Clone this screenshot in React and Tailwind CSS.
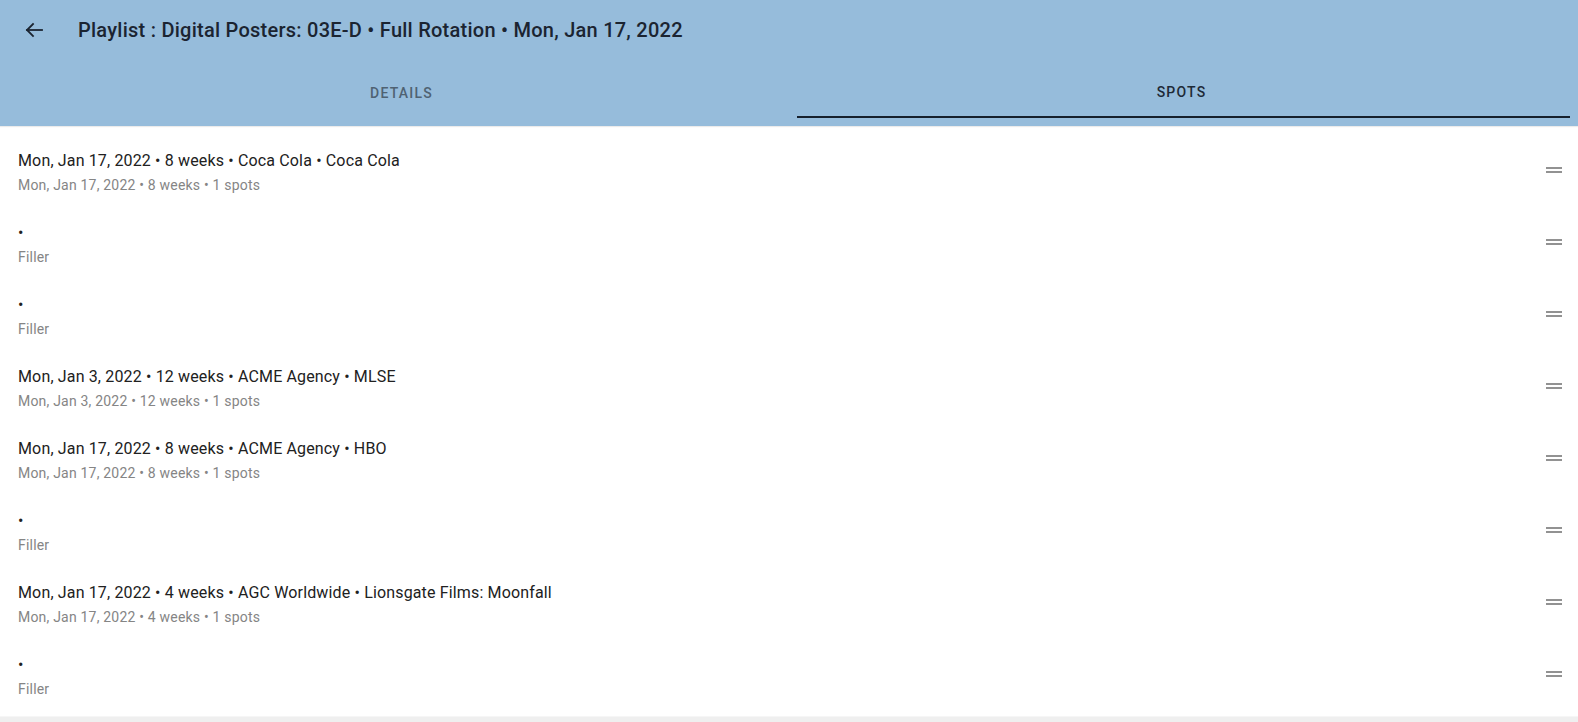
// Playlist detail screen: app bar with tabs and a sortable list of spots.

const spots = [
  { primary: "Mon, Jan 17, 2022 • 8 weeks • Coca Cola • Coca Cola", secondary: "Mon, Jan 17, 2022 • 8 weeks • 1 spots" },
  { primary: "•", secondary: "Filler" },
  { primary: "•", secondary: "Filler" },
  { primary: "Mon, Jan 3, 2022 • 12 weeks • ACME Agency • MLSE", secondary: "Mon, Jan 3, 2022 • 12 weeks • 1 spots" },
  { primary: "Mon, Jan 17, 2022 • 8 weeks • ACME Agency • HBO", secondary: "Mon, Jan 17, 2022 • 8 weeks • 1 spots" },
  { primary: "•", secondary: "Filler" },
  { primary: "Mon, Jan 17, 2022 • 4 weeks • AGC Worldwide • Lionsgate Films: Moonfall", secondary: "Mon, Jan 17, 2022 • 4 weeks • 1 spots" },
  { primary: "•", secondary: "Filler" },
];

function BackArrow() {
  return (
    <svg width="24" height="24" viewBox="0 0 24 24" fill="none" stroke="#1b2431" strokeWidth="1.8" strokeLinecap="square">
      <path d="M20 12H5" />
      <path d="M11 6l-6 6 6 6" />
    </svg>
  );
}

function DragHandle() {
  return (
    <svg width="24" height="24" viewBox="0 0 24 24" fill="#929292">
      <path d="M20 9H4v2h16V9zM4 15h16v-2H4v2z" />
    </svg>
  );
}

function SpotRow({ primary, secondary }) {
  return (
    <li className="flex items-center h-[72px] pl-[18px] pr-[12px]">
      <div className="flex-1 flex flex-col pt-[4px]">
        <span className="text-[16px] leading-[24px] tracking-[0.15px] text-[#212121]">{primary}</span>
        <span className="mt-[2px] text-[14px] leading-[20px] tracking-[0.2px] text-[#858585]">{secondary}</span>
      </div>
      <DragHandle />
    </li>
  );
}

export default function App() {
  return (
    <div className="h-screen flex flex-col bg-white" style={{ fontFamily: "Roboto, 'Liberation Sans', sans-serif" }}>
      <header className="bg-[#96bcdb] shadow-[0_1px_1px_rgba(0,0,0,0.08)] pb-[8px]">
        <div className="h-[60px] flex items-center pl-[22px]">
          <BackArrow />
          <h1 className="ml-[32px] text-[20px] font-medium text-[#1b2431] tracking-[0.25px]">
            Playlist : Digital Posters: 03E-D • Full Rotation • Mon, Jan 17, 2022
          </h1>
        </div>
        <nav className="flex h-[58px]">
          <button className="w-[797px] flex items-center justify-center pt-[9px] pl-[6px] text-[14px] font-medium uppercase tracking-[1.2px] text-[#4f6272]">
            Details
          </button>
          <button className="w-[773px] flex items-center justify-center pt-[9px] pr-[4px] text-[14px] font-medium uppercase tracking-[1.2px] text-[#1e2a37] border-b-2 border-[#16202c]">
            Spots
          </button>
        </nav>
      </header>
      <ul className="pt-[8px] pb-[6px]">
        {spots.map((s, i) => (
          <SpotRow key={i} {...s} />
        ))}
      </ul>
      <div className="flex-1 bg-[#efefef] border-t border-[#f6f6f6]" />
    </div>
  );
}
